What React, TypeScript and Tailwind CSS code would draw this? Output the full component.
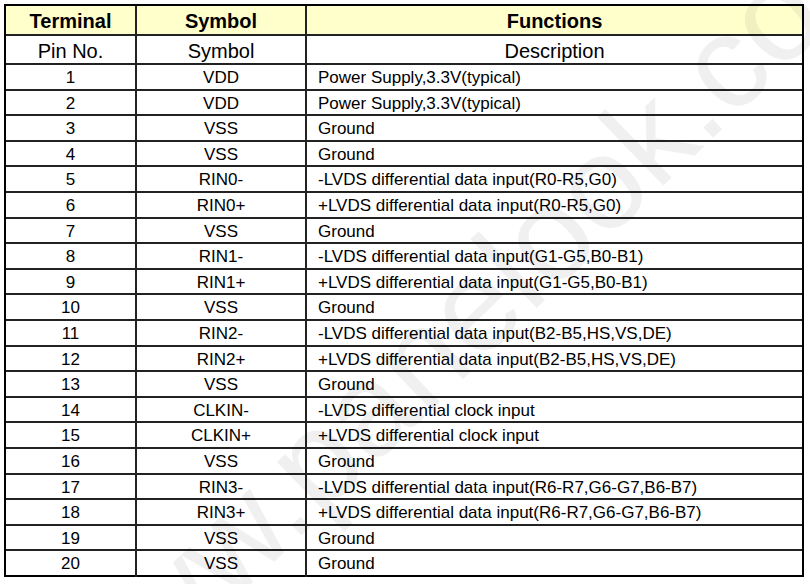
const pins = [
  { no: 1, symbol: 'VDD', desc: 'Power Supply,3.3V(typical)' },
  { no: 2, symbol: 'VDD', desc: 'Power Supply,3.3V(typical)' },
  { no: 3, symbol: 'VSS', desc: 'Ground' },
  { no: 4, symbol: 'VSS', desc: 'Ground' },
  { no: 5, symbol: 'RIN0-', desc: '-LVDS differential data input(R0-R5,G0)' },
  { no: 6, symbol: 'RIN0+', desc: '+LVDS differential data input(R0-R5,G0)' },
  { no: 7, symbol: 'VSS', desc: 'Ground' },
  { no: 8, symbol: 'RIN1-', desc: '-LVDS differential data input(G1-G5,B0-B1)' },
  { no: 9, symbol: 'RIN1+', desc: '+LVDS differential data input(G1-G5,B0-B1)' },
  { no: 10, symbol: 'VSS', desc: 'Ground' },
  { no: 11, symbol: 'RIN2-', desc: '-LVDS differential data input(B2-B5,HS,VS,DE)' },
  { no: 12, symbol: 'RIN2+', desc: '+LVDS differential data input(B2-B5,HS,VS,DE)' },
  { no: 13, symbol: 'VSS', desc: 'Ground' },
  { no: 14, symbol: 'CLKIN-', desc: '-LVDS differential clock input' },
  { no: 15, symbol: 'CLKIN+', desc: '+LVDS differential clock input' },
  { no: 16, symbol: 'VSS', desc: 'Ground' },
  { no: 17, symbol: 'RIN3-', desc: '-LVDS differential data input(R6-R7,G6-G7,B6-B7)' },
  { no: 18, symbol: 'RIN3+', desc: '+LVDS differential data input(R6-R7,G6-G7,B6-B7)' },
  { no: 19, symbol: 'VSS', desc: 'Ground' },
  { no: 20, symbol: 'VSS', desc: 'Ground' },
];

const row = 'grid grid-cols-[129px_170px_1fr]';
const cell = 'flex items-center justify-center';
const sep = 'border-l-2 border-[#222]';

export default function App() {
  return (
    <div className="relative w-[810px] h-[584px] overflow-hidden bg-white text-black font-['Liberation_Sans',Arial,sans-serif]">
      <div className="ml-[4px] mt-[4px] w-[800px] border-2 border-black">
        {/* header */}
        <div className={`${row} h-[28px] bg-[#ffffcc] text-[20px] font-bold`}>
          <div className={cell}>Terminal</div>
          <div className={`${cell} ${sep}`}>Symbol</div>
          <div className={`${cell} ${sep}`}>Functions</div>
        </div>
        <div className={`${row} h-[29px] border-t-2 border-[#222] text-[20px]`}>
          <div className={cell}>Pin No.</div>
          <div className={`${cell} ${sep}`}>Symbol</div>
          <div className={`${cell} ${sep}`}>Description</div>
        </div>

        {pins.map((p) => (
          <div key={p.no} className={`${row} h-[25.6px] border-t-2 border-[#222] text-[17px]`}>
            <div className={cell}>{p.no}</div>
            <div className={`${cell} ${sep}`}>{p.symbol}</div>
            <div className={`flex items-center pl-[11px] ${sep}`}>{p.desc}</div>
          </div>
        ))}
      </div>

      {/* watermark */}
      <div className="pointer-events-none absolute left-[470px] top-[310px] -translate-x-1/2 -translate-y-1/2 -rotate-[44deg] whitespace-nowrap text-[132px] leading-none text-black/[0.06]">
        www.panelook.com
      </div>
    </div>
  );
}
